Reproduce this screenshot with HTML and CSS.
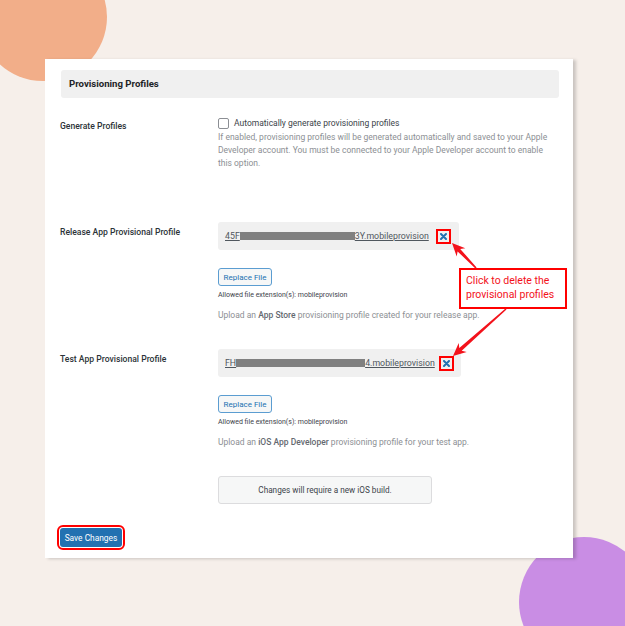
FILE: index.html
```html
<!DOCTYPE html>
<html lang="en">
<head>
    <meta charset="UTF-8">
    <meta name="viewport" content="width=device-width, initial-scale=1">
    <title>Provisioning Profiles</title>
    <link rel="stylesheet" href="styles.css">
</head>
<body>

<div class="page">
    <div class="blob blob-orange"></div>
    <div class="blob blob-purple"></div>

    <div class="card">
        <h2 class="section-title">Provisioning Profiles</h2>

        <div class="field field-generate">
            <div class="field-label">Generate Profiles</div>
            <div class="field-body">
                <label class="check"><input type="checkbox"> Automatically generate provisioning profiles</label>
                <p class="desc">If enabled, provisioning profiles will be generated automatically and saved to your Apple<br>Developer account. You must be connected to your Apple Developer account to enable<br>this option.</p>
            </div>
        </div>

        <div class="field field-release">
            <div class="field-label">Release App Provisional Profile</div>
            <div class="field-body">
                <div class="file-box file-box-release">
                    <a class="file-link" href="#">45F<span class="redact redact-release"></span>3Y.mobileprovision</a>
                    <span class="remove">
                        <svg width="7" height="7" viewBox="0 0 7 7"><path d="M1 1 L6 6 M6 1 L1 6" stroke="#2271b1" stroke-width="2" stroke-linecap="round"/></svg>
                    </span>
                </div>
                <button class="btn-replace">Replace File</button>
                <p class="allowed">Allowed file extension(s): mobileprovision</p>
                <p class="hint">Upload an <strong>App Store</strong> provisioning profile created for your release app.</p>
            </div>
        </div>

        <div class="field field-test">
            <div class="field-label">Test App Provisional Profile</div>
            <div class="field-body">
                <div class="file-box file-box-test">
                    <a class="file-link" href="#">FH<span class="redact redact-test"></span>4.mobileprovision</a>
                    <span class="remove">
                        <svg width="7" height="7" viewBox="0 0 7 7"><path d="M1 1 L6 6 M6 1 L1 6" stroke="#2271b1" stroke-width="2" stroke-linecap="round"/></svg>
                    </span>
                </div>
                <button class="btn-replace">Replace File</button>
                <p class="allowed">Allowed file extension(s): mobileprovision</p>
                <p class="hint">Upload an <strong>iOS App Developer</strong> provisioning profile for your test app.</p>
            </div>
        </div>

        <div class="notice">Changes will require a new iOS build.</div>

        <button class="btn-save">Save Changes</button>
    </div>

    <div class="callout">Click to delete the<br>provisional profiles</div>

    <!-- annotation arrows -->
    <svg class="arrows" width="625" height="626" viewBox="0 0 625 626">
        <polygon fill="#f3121b" points="452,243 465.3,248.2 460.2,248.9 476.6,267.4 475.4,268.6 457.6,251.4 456.7,256.5"/>
        <polygon fill="#f3121b" points="453,356 466.7,351.9 461.7,350.7 506.5,309.6 505.5,308.4 459.3,348.1 458.7,342.9"/>
    </svg>
</div>

</body>
</html>
```

FILE: styles.css
```css
body {
    margin: 0;
    background-color: #f6efea;
    font-family: Roboto, "Liberation Sans", sans-serif;
    color: #1d2327;
}

.page {
    position: relative;
    width: 625px;
    height: 626px;
    overflow: hidden;
    box-sizing: border-box;
    padding: 59px 0 0 45px;
}

/* decorative circles behind the card */
.blob {
    position: absolute;
    border-radius: 50%;
}

.blob-orange {
    left: -21px;
    top: -47px;
    width: 128px;
    height: 128px;
    background-color: #f2ae89;
}

.blob-purple {
    left: 519px;
    top: 537px;
    width: 130px;
    height: 130px;
    background-color: #c98de4;
}

.card {
    position: relative;
    z-index: 1;
    width: 528px;
    height: 499px;
    box-sizing: border-box;
    padding: 11px 14px 0 15px;
    background-color: #fff;
    box-shadow: 3px 1px 3px rgba(0, 0, 0, 0.18);
}

.section-title {
    margin: 0 0 0 1px;
    height: 28px;
    padding-left: 8px;
    background-color: #f0f0f0;
    border-radius: 3px;
    font-size: 9.6px;
    font-weight: 700;
    line-height: 28px;
    color: #1d2327;
}

.field {
    display: flex;
}

.field-label {
    width: 158px;
    flex-shrink: 0;
    padding-top: 2px;
    font-size: 8.6px;
    font-weight: 500;
    line-height: 16px;
    color: #2c3338;
}

.field-body {
    flex: 1;
}

.field-generate { margin-top: 18px; }
.field-release { margin-top: 52px; }
.field-test { margin-top: 27px; }

.check {
    display: flex;
    align-items: center;
    gap: 5px;
    font-size: 8.5px;
    line-height: 14px;
    color: #3c434a;
}

.check input {
    appearance: none;
    margin: 0;
    width: 11px;
    height: 11px;
    border: 1px solid #8c8f94;
    border-radius: 2px;
    background: #fff;
}

.desc {
    margin: 1px 0 0;
    font-size: 8.5px;
    line-height: 13px;
    color: #8c8f94;
    white-space: nowrap;
}

.file-box {
    height: 28px;
    box-sizing: border-box;
    display: flex;
    align-items: center;
    justify-content: space-between;
    padding: 0 8px 0 7px;
    background-color: #f0f0f0;
    border-radius: 3px;
}

.file-box-release { width: 241px; }
.file-box-test { width: 243px; padding-right: 7px; }

.file-link {
    font-size: 8.8px;
    color: #50575e;
    text-decoration: underline;
    white-space: nowrap;
}

.redact {
    display: inline-block;
    height: 8px;
    vertical-align: -1px;
    background-color: #808080;
}

.redact-release { width: 115px; }
.redact-test { width: 129px; }

.remove {
    width: 15px;
    height: 15px;
    box-sizing: border-box;
    border: 2px solid #f00;
    display: flex;
    align-items: center;
    justify-content: center;
}

.btn-replace {
    display: block;
    margin-top: 18px;
    width: 54px;
    height: 18px;
    padding: 0;
    border: 1px solid #5b9dd1;
    border-radius: 3px;
    background-color: #f6f7f7;
    color: #2271b1;
    font-family: inherit;
    font-size: 8px;
}

.allowed {
    margin: 4px 0 0;
    font-size: 7px;
    line-height: 10px;
    color: #3c434a;
}

.hint {
    margin: 9px 0 0;
    font-size: 8.5px;
    line-height: 13px;
    color: #8c8f94;
}

.hint strong {
    font-weight: 500;
    color: #646970;
}

.notice {
    margin: 27px 0 0 158px;
    width: 214px;
    height: 28px;
    box-sizing: border-box;
    border: 1px solid #dcdcde;
    border-radius: 3px;
    background-color: #f6f7f7;
    font-size: 8.2px;
    line-height: 26px;
    text-align: center;
    color: #3c434a;
}

.btn-save {
    display: block;
    margin-top: 24px;
    width: 62px;
    height: 19px;
    padding: 0;
    border: none;
    border-radius: 3px;
    background-color: #2271b1;
    color: #fff;
    font-family: inherit;
    font-size: 8.4px;
    outline: 2px solid #f00;
    outline-offset: 1px;
}

/* annotation */
.callout {
    position: absolute;
    z-index: 3;
    left: 459px;
    top: 268px;
    width: 108px;
    height: 41px;
    box-sizing: border-box;
    padding: 4px 0 0 5px;
    border: 2px solid #f00;
    background-color: #fff;
    color: #f3121b;
    font-size: 10.5px;
    line-height: 14px;
}

.arrows {
    position: absolute;
    z-index: 4;
    left: 0;
    top: 0;
    pointer-events: none;
}
```
